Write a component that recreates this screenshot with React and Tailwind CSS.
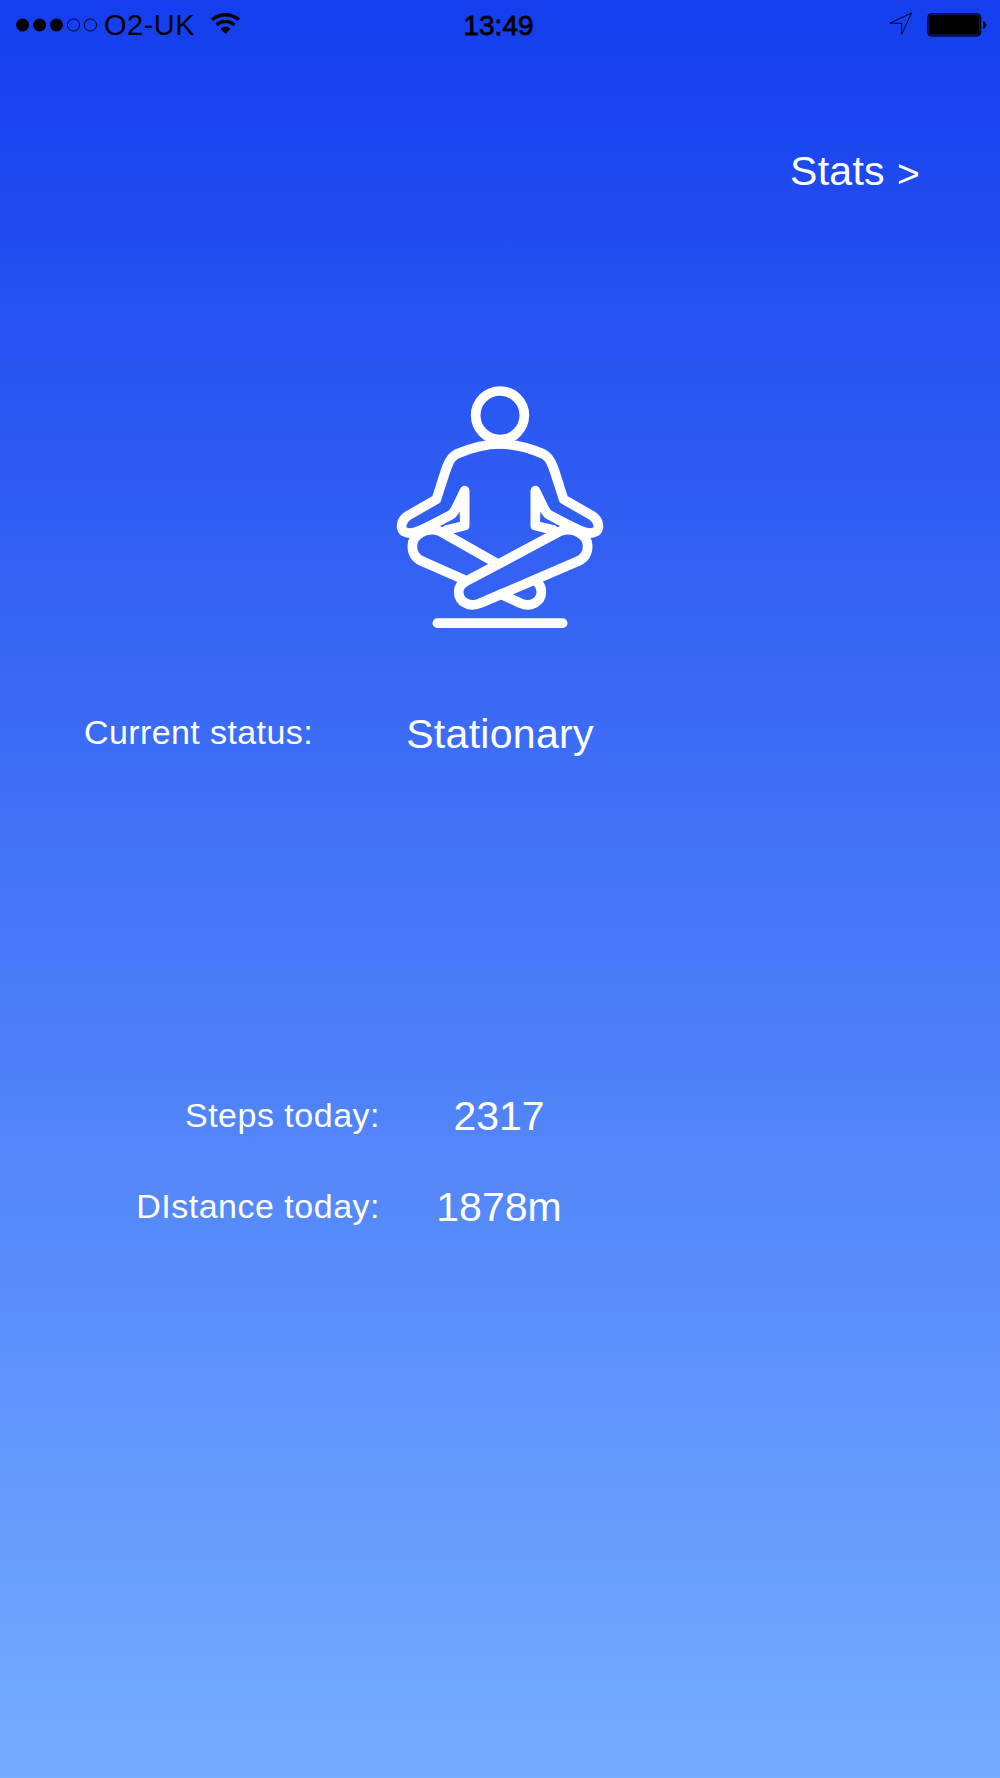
function StatusBar() {
  return (
    <div className="flex h-[50px] items-center justify-between pl-4 pr-[13px] text-black">
      <div className="flex flex-1 items-center">
        <svg width="82" height="14" viewBox="0 0 82 14">
          <circle cx="6.6" cy="7" r="6.5" />
          <circle cx="23.6" cy="7" r="6.5" />
          <circle cx="40.5" cy="7" r="6.5" />
          <circle cx="57.5" cy="7" r="6.1" fill="none" stroke="currentColor" strokeWidth="0.9" />
          <circle cx="74.4" cy="7" r="6.1" fill="none" stroke="currentColor" strokeWidth="0.9" />
        </svg>
        <span className="ml-[6px] pt-px text-[29px] leading-none tracking-[0.5px]">O2-UK</span>
        <svg className="-mt-[3px] ml-[15px]" width="31" height="23" viewBox="0 0 31 23" fill="none" stroke="currentColor" strokeWidth="3.4">
          <path d="M2.2 7.8C9.7 1 21.3 1 28.8 7.8" />
          <path d="M6.6 13C11.6 8.2 19.4 8.2 24.4 13" />
          <path d="M10.6 16.8C13.4 14.2 17.6 14.2 20.4 16.8L15.5 22Z" fill="currentColor" stroke="none" />
        </svg>
      </div>
      <span className="mr-[6px] pt-px text-[28px] leading-none [-webkit-text-stroke:0.8px_black]">13:49</span>
      <div className="flex flex-1 items-center justify-end gap-[14px]">
        <svg className="-mt-[2px]" width="24" height="24" viewBox="0 0 24 24" fill="none" stroke="currentColor" strokeWidth="0.9">
          <path d="M22.5 1L1 11.2H12.6V22.5Z" />
        </svg>
        <svg width="60" height="24" viewBox="0 0 60 24">
          <rect x="0.7" y="0.7" width="53" height="22.4" rx="3.5" fill="#0a1f78" stroke="currentColor" strokeWidth="1" />
          <rect x="2.2" y="2.2" width="50" height="19.4" rx="2" />
          <path d="M56 8C60.3 8.8 60.3 15.2 56 16Z" />
        </svg>
      </div>
    </div>
  );
}

function MeditateIcon() {
  return (
    <svg
      width="240"
      height="270"
      viewBox="0 0 720 810"
      fill="none"
      stroke="white"
      strokeWidth="29"
      strokeLinecap="round"
      strokeLinejoin="round"
    >
      <circle cx="360" cy="136" r="73" />
      {/* shoulders and arms */}
      <path d="M360 222C312 222 272 234 230 252C214 260 208 272 202 288C190 320 182 350 169 388L84 437C62 451 60 476 73 485C86 493 104 488 118 482C150 468 180 452 213 434C220 430 224 424 228 415L254 362V467L200 480" />
      <path d="M360 222C408 222 448 234 490 252C506 260 512 272 518 288C530 320 538 350 551 388L636 437C658 451 660 476 647 485C634 493 616 488 602 482C570 468 540 452 507 434C500 430 496 424 492 415L466 362V467L520 480" />
      {/* crossed legs */}
      <path d="M343 576L180 484C140 468 97 496 97 528C97 551 107 565 125 573L250 628" />
      <path d="M258 634L540 484C580 468 623 496 623 528C623 551 613 565 595 573L302 699C268 715 236 695 236 665C236 649 244 641 258 634Z" />
      <path d="M362 672L420 699C452 715 484 695 484 665C484 651 478 642 470 635" />
      <path d="M172 759.5H548" />
    </svg>
  );
}

function StatRow({ label, value }) {
  return (
    <div className="flex h-12 items-center">
      <span className="w-[380px] pb-px text-right text-[34px] tracking-[0.5px]">{label}</span>
      <span className="ml-[19px] w-[200px] pt-[2px] text-center text-[41px]">{value}</span>
    </div>
  );
}

export default function App() {
  return (
    <div className="flex h-[1778px] w-[1000px] flex-col overflow-hidden bg-linear-to-b/srgb from-[#143eee] to-[#74adff] font-['Liberation_Sans',Arial,sans-serif] text-white">
      <StatusBar />

      <div className="mt-[97px] flex h-12 items-center justify-end pr-20">
        <button className="flex items-center text-[41px] leading-none tracking-[0.3px]">
          Stats
          <span className="ml-[12px] pt-[5px] text-[39px] font-light">&gt;</span>
        </button>
      </div>

      <div className="mt-[175px] flex justify-center">
        <MeditateIcon />
      </div>

      <div className="mt-[70px] flex h-12 items-center">
        <span className="w-[313px] pb-[3px] text-right text-[34px] tracking-[0.4px]">Current status:</span>
        <span className="ml-[87px] w-[200px] pt-px text-center text-[41px] tracking-[0.3px]">Stationary</span>
      </div>

      <div className="mt-[334px] flex flex-col gap-[43px]">
        <StatRow label="Steps today:" value="2317" />
        <StatRow label="DIstance today:" value="1878m" />
      </div>
    </div>
  );
}
